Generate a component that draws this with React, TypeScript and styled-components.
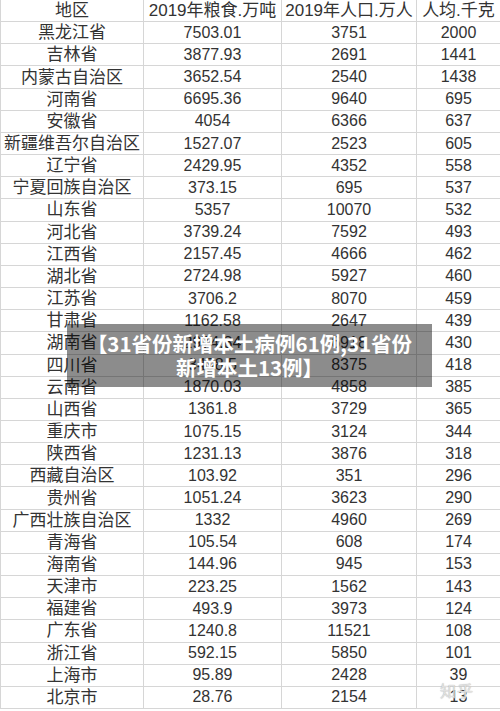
import React from 'react';
import styled, { createGlobalStyle } from 'styled-components';

const GlobalStyle = createGlobalStyle`
  html, body {
    margin: 0;
    padding: 0;
    background: #ffffff;
  }
`;

const Page = styled.div`
  position: relative;
  width: 500px;
  height: 711px;
  overflow: hidden;
  background: #ffffff;
`;

const Grid = styled.div`
  display: grid;
  grid-template-columns: 143px 138px 135px 84px;
  grid-auto-rows: 22.16px;
  border-left: 1px solid #d6d6d6;
  box-sizing: border-box;
  width: 500px;
`;

const Cell = styled.div<{ $big?: boolean }>`
  display: flex;
  align-items: center;
  justify-content: center;
  box-sizing: border-box;
  border-right: 1px solid #d6d6d6;
  border-bottom: 1px solid #d6d6d6;
  color: #333333;
  font-family: 'Liberation Sans', 'Noto Sans CJK SC', sans-serif;
  font-size: ${(p) => (p.$big ? '17px' : '16px')};
  white-space: nowrap;
  line-height: 1;
`;

const Banner = styled.div`
  position: absolute;
  left: 67px;
  top: 324px;
  width: 365px;
  height: 63px;
  box-sizing: border-box;
  padding: 7px 4px;
  background: rgba(0, 0, 0, 0.45);
  color: #ffffff;
  font-family: 'Noto Sans CJK SC', sans-serif;
  font-weight: 700;
  font-size: 20.5px;
  line-height: 24px;
  text-align: center;
  white-space: nowrap;
`;

const Watermark = styled.div`
  position: absolute;
  left: 440px;
  top: 678px;
  font-family: 'Noto Sans CJK SC', sans-serif;
  font-size: 16px;
  color: rgba(235, 235, 235, 0.85);
  text-shadow: 0 0 1px #9a9a9a;
  letter-spacing: 1px;
`;

const header = ['地区', '2019年粮食.万吨', '2019年人口.万人', '人均.千克'];

const rows: [string, string, string, string][] = [
  ['黑龙江省', '7503.01', '3751', '2000'],
  ['吉林省', '3877.93', '2691', '1441'],
  ['内蒙古自治区', '3652.54', '2540', '1438'],
  ['河南省', '6695.36', '9640', '695'],
  ['安徽省', '4054', '6366', '637'],
  ['新疆维吾尔自治区', '1527.07', '2523', '605'],
  ['辽宁省', '2429.95', '4352', '558'],
  ['宁夏回族自治区', '373.15', '695', '537'],
  ['山东省', '5357', '10070', '532'],
  ['河北省', '3739.24', '7592', '493'],
  ['江西省', '2157.45', '4666', '462'],
  ['湖北省', '2724.98', '5927', '460'],
  ['江苏省', '3706.2', '8070', '459'],
  ['甘肃省', '1162.58', '2647', '439'],
  ['湖南省', '2974.84', '6918', '430'],
  ['四川省', '3498.5', '8375', '418'],
  ['云南省', '1870.03', '4858', '385'],
  ['山西省', '1361.8', '3729', '365'],
  ['重庆市', '1075.15', '3124', '344'],
  ['陕西省', '1231.13', '3876', '318'],
  ['西藏自治区', '103.92', '351', '296'],
  ['贵州省', '1051.24', '3623', '290'],
  ['广西壮族自治区', '1332', '4960', '269'],
  ['青海省', '105.54', '608', '174'],
  ['海南省', '144.96', '945', '153'],
  ['天津市', '223.25', '1562', '143'],
  ['福建省', '493.9', '3973', '124'],
  ['广东省', '1240.8', '11521', '108'],
  ['浙江省', '592.15', '5850', '101'],
  ['上海市', '95.89', '2428', '39'],
  ['北京市', '28.76', '2154', '13'],
];

export default function App() {
  return (
    <Page>
      <GlobalStyle />
      <Grid>
        {header.map((h) => (
          <Cell key={h} $big>
            {h}
          </Cell>
        ))}
        {rows.map((r) =>
          r.map((v, i) => (
            <Cell key={r[0] + i} $big={i === 0}>
              {v}
            </Cell>
          )),
        )}
      </Grid>
      <Banner>
        【31省份新增本土病例61例,31省份
        <br />
        新增本土13例】
      </Banner>
      <Watermark>知乎</Watermark>
    </Page>
  );
}
